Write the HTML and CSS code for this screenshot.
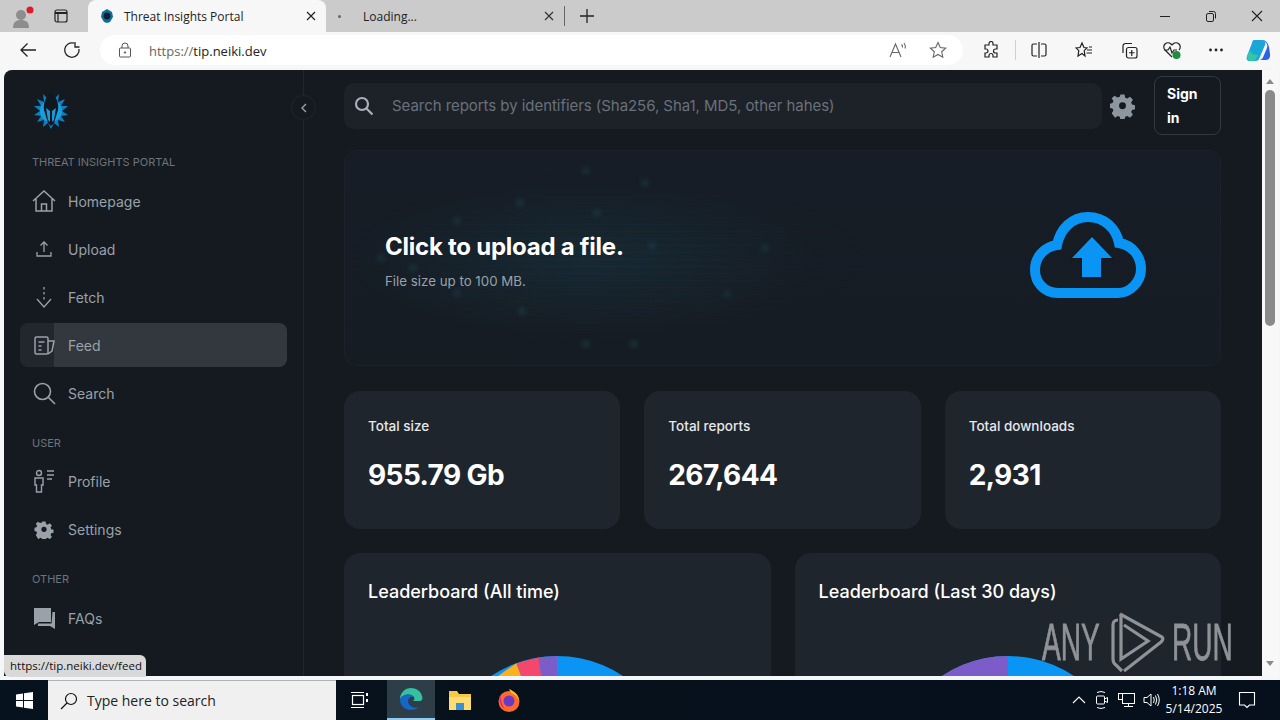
FILE: index.html
```html
<!DOCTYPE html>
<html>
	<head>
		<meta charset="UTF-8">
		<meta name="viewport" content="width=device-width, initial-scale=1.0">
		<title>Threat Insights Portal</title>
		<link rel="stylesheet" href="styles.css">
	</head>
	<body>
		<!-- browser tabs -->
		<div class="tabstrip">
			<div class="strip-icons">
				<svg class="profile" width="24" height="24" viewBox="0 0 24 24"><circle cx="10" cy="11" r="5" fill="#8d8d8d"/><path d="M2 24c0-6 3-8 8-8s8 2 8 8z" fill="#8d8d8d"/><circle cx="19" cy="6" r="3.5" fill="#e01b24"/></svg>
				<svg width="16" height="16" viewBox="0 0 16 16" fill="none" stroke="#222" stroke-width="1.2"><rect x="2" y="2" width="12" height="12" rx="2"/><path d="M2 5h12" stroke-width="2"/><path d="M5 5v9"/></svg>
			</div>
			<div class="tab tab-active">
				<svg width="14" height="16" viewBox="0 0 14 16"><path d="M7 1l5 3 1 5-3 5-3 1-3-1-3-5 1-5z" fill="#0d6f9c"/><circle cx="7" cy="8" r="3.4" fill="#10202c"/></svg>
				<span class="tab-title">Threat Insights Portal</span>
				<svg class="tab-close" width="12" height="12" viewBox="0 0 12 12" stroke="#222" stroke-width="1.2"><path d="M2 2l8 8M10 2l-8 8"/></svg>
			</div>
			<div class="tab">
				<span class="tab-dot"></span>
				<span class="tab-title">Loading...</span>
				<svg class="tab-close" width="12" height="12" viewBox="0 0 12 12" stroke="#333" stroke-width="1.2"><path d="M2 2l8 8M10 2l-8 8"/></svg>
			</div>
			<span class="tab-sep"></span>
			<svg class="tab-new" width="16" height="16" viewBox="0 0 16 16" stroke="#222" stroke-width="1.3"><path d="M8 1v14M1 8h14"/></svg>
			<div class="win-controls">
				<svg width="12" height="12" viewBox="0 0 12 12" stroke="#222"><path d="M1 6.500h10"/></svg>
				<svg width="12" height="12" viewBox="0 0 12 12" fill="none" stroke="#222"><rect x="1.500" y="3.500" width="7" height="8" rx="1.500"/><path d="M4 1.500h4.500a2 2 0 0 1 2 2v5"/></svg>
				<svg width="12" height="12" viewBox="0 0 12 12" stroke="#222" stroke-width="1.1"><path d="M1 1l10 10M11 1L1 11"/></svg>
			</div>
		</div>

		<!-- address bar -->
		<div class="toolbar">
			<svg class="tool-back" width="18" height="18" viewBox="0 0 18 18" fill="none" stroke="#222" stroke-width="1.3"><path d="M17 9H2M8.500 2.500L2 9l6.500 6.500"/></svg>
			<svg class="tool-reload" width="18" height="18" viewBox="0 0 18 18" fill="none" stroke="#222" stroke-width="1.3"><path d="M11 2.200A7.200 7.200 0 1 0 16 8M12 1v5h4.500"/></svg>
			<div class="address">
				<svg width="14" height="16" viewBox="0 0 14 16" fill="none" stroke="#555"><rect x="1.500" y="6" width="11" height="9" rx="1"/><path d="M4 6V4a3 3 0 0 1 6 0v2"/><circle cx="7" cy="10.500" r="0.700" fill="#555"/></svg>
				<span class="url"><span class="url-dim">https://</span>tip.neiki.dev</span>
				<svg class="addr-read" width="18" height="18" viewBox="0 0 18 18" fill="none" stroke="#666" stroke-width="1.100"><path d="M1 16L6.500 3 12 16M3 11.500h7M12.500 3.500q1.500 1.500 1 3M15 2q2 2.500 1 5.500"/></svg>
				<svg width="18" height="18" viewBox="0 0 18 18" fill="none" stroke="#666" stroke-width="1.100"><path d="M9 1.500l2.300 5 5.400.6-4 3.700 1.100 5.400L9 13.500l-4.800 2.700 1.100-5.400-4-3.700 5.400-.6z"/></svg>
			</div>
			<div class="tool-icons">
				<svg class="ti-ext" width="18" height="18" viewBox="0 0 18 18" fill="none" stroke="#222" stroke-width="1.200"><path d="M7 2.500a2 2 0 0 1 4 0V4h4v4h-1.500a2 2 0 0 0 0 4H15v4h-4v-1.500a2 2 0 0 0-4 0V16H3v-4h1a2 2 0 0 0 0-4H3V4h4z"/></svg>
				<span class="ti-sep"></span>
				<svg class="ti-split" width="18" height="18" viewBox="0 0 18 18" fill="none" stroke="#222" stroke-width="1.200"><path d="M7 3H3.500A1.500 1.500 0 0 0 2 4.500v9A1.500 1.500 0 0 0 3.500 15H7M11 3h3.500A1.500 1.500 0 0 1 16 4.500v9a1.500 1.500 0 0 1-1.500 1.500H11M9 1v16"/></svg>
				<svg class="ti-fav" width="18" height="18" viewBox="0 0 18 18" fill="none" stroke="#222" stroke-width="1.200"><path d="M7 2l2 4.500 3 .4-2.800 2.700.8 5.400L7 12.500l-4 2.500.8-5.400L1 6.900l4-.4zM12 9h5M11.500 12h5.500M14 6h3"/></svg>
				<svg class="ti-coll" width="18" height="18" viewBox="0 0 18 18" fill="none" stroke="#222" stroke-width="1.200"><rect x="6.500" y="6.500" width="10.500" height="10.500" rx="2"/><path d="M11.750 9v6M9 11.750h5.500M3 12V5a2.500 2.500 0 0 1 2.500-2.500H12"/></svg>
				<svg class="ti-health" width="20" height="20" viewBox="0 0 20 20" fill="none" stroke="#222" stroke-width="1.200"><path d="M10 17L3 10a4 4 0 0 1 6-6l1 1 1-1a4 4 0 0 1 6 6M2 10h4l2-3 2 6 2-3h3"/><circle cx="14.500" cy="15" r="4" fill="#1e8e3e" stroke="none"/></svg>
				<svg class="ti-more" width="18" height="18" viewBox="0 0 18 18" fill="#222"><circle cx="3.500" cy="9" r="1.400"/><circle cx="9" cy="9" r="1.400"/><circle cx="14.500" cy="9" r="1.400"/></svg>
				<svg class="ti-copilot" width="26" height="26" viewBox="0 0 26 26"><path d="M9 3h8c3 0 4 3 3 5l-6 14c-1 2-3 2-5 2H5c-3 0-4-2-3-5L7 6c.400-2 1-3 2-3z" fill="#1aa7d8"/><path d="M17 3c4 0 6 3 7 7l1 7c.500 3-1 6-4 6h-6c3-1 3-3 4-5l3-7c1-3 0-6-5-8z" fill="#2a62e8"/><path d="M8 24c-3 0-6-1-6-5l3-6c1 4 4 5 8 5l-2 4c-.500 1-1.500 2-3 2z" fill="#33c7a8"/></svg>
			</div>
		</div>

		<!-- the page itself -->
		<div class="viewport">
			<div class="page">
				<aside class="sidebar">
					<svg class="logo" width="36" height="38" viewBox="0 0 36 38">
						<path d="M18 9l3-1 5-5-1 8 7-3-4 7 7 0-6 5 6 4-7 1 4 6-7-2 1 7-5-4-3 6-3-6-5 4 1-7-7 2 4-6-7-1 6-4-6-5 7 0-4-7 7 3-1-8 5 5z" fill="#0f7fc0"/>
						<circle cx="18" cy="20" r="11" fill="#17a0e0"/>
						<path d="M18 2c5 3 8 10 7 17l-4 13-3 3-3-3-4-13c-1-7 2-14 7-17z" fill="#10171f"/>
						<path d="M13 17l4 3v11l-2-2zM23 17l-4 3v11l2-2z" fill="#1b9ad6"/>
					</svg>

					<div class="nav-label nav-label-first">THREAT INSIGHTS PORTAL</div>
					<a class="nav-item">
						<svg width="24" height="24" viewBox="0 0 24 24" fill="none" stroke="#9aa1a9" stroke-width="1.500"><path d="M1 12L12 2l11 10M4 10v12h16V10M9.500 22v-7h5v7"/></svg>
						<span>Homepage</span>
					</a>
					<a class="nav-item">
						<svg width="24" height="24" viewBox="0 0 24 24" fill="none" stroke="#9aa1a9" stroke-width="1.300"><path d="M12 15V5M8.500 8.500L12 5l3.500 3.500M5 15v4h14v-4"/></svg>
						<span>Upload</span>
					</a>
					<a class="nav-item">
						<svg width="24" height="24" viewBox="0 0 24 24" fill="none" stroke="#9aa1a9" stroke-width="1.300"><path d="M12 2v15" stroke-dasharray="2.500 2.500"/><path d="M5 14l7 8 7-8"/></svg>
						<span>Fetch</span>
					</a>
					<a class="nav-item nav-item-active">
						<svg width="24" height="24" viewBox="0 0 24 24" fill="none" stroke="#9aa1a9" stroke-width="1.500"><rect x="3" y="4" width="13" height="17" rx="1.500"/><path d="M6.500 9h6M6.500 13h3M6.500 17h3M16 8h6l-2 10-4 3"/></svg>
						<span>Feed</span>
					</a>
					<a class="nav-item">
						<svg width="24" height="24" viewBox="0 0 24 24" fill="none" stroke="#9aa1a9" stroke-width="1.600"><circle cx="10.500" cy="10.500" r="8"/><path d="M16.500 16.500L23 23"/></svg>
						<span>Search</span>
					</a>

					<div class="nav-label">USER</div>
					<a class="nav-item">
						<svg width="24" height="24" viewBox="0 0 24 24" fill="none" stroke="#9aa1a9" stroke-width="1.400"><circle cx="7" cy="4" r="2.500"/><path d="M3 9h8v7H9.500v7h-5v-7H3zM15 2h7M15 6h7M15 10h5"/></svg>
						<span>Profile</span>
					</a>
					<a class="nav-item">
						<svg width="24" height="19" viewBox="0 0 24 24"><path d="M10 2h4l.6 3 2 .9 2.600-1.700 2.800 2.800-1.700 2.600.9 2 2.800.6v4l-2.800.6-.9 2 1.700 2.600-2.800 2.800-2.600-1.700-2 .9-.6 2.600h-4l-.6-2.600-2-.9-2.600 1.700L1.600 19l1.700-2.600-.9-2L0 13.800v-4l2.400-.6.9-2L1.600 4.600l2.800-2.400L7 3.900l2.400-.9zM12 8.500a3.300 3.300 0 1 0 0 6.600 3.300 3.300 0 0 0 0-6.600z" fill="#9aa1a9" fill-rule="evenodd"/></svg>
						<span>Settings</span>
					</a>

					<div class="nav-label nav-label-last">OTHER</div>
					<a class="nav-item">
						<svg width="24" height="24" viewBox="0 0 24 24"><path d="M2 2h17v14H7l-5 3z" fill="#9aa1a9"/><path d="M20.500 6H23v17l-5-3H6v-2.500h13.500z" fill="#9aa1a9"/></svg>
						<span>FAQs</span>
					</a>
					<a class="nav-item">
						<svg width="24" height="24" viewBox="0 0 24 24" fill="none" stroke="#9aa1a9" stroke-width="1.500"><path d="M4 3h16v18H4z"/></svg>
					</a>
				</aside>

				<main class="content">
					<div class="topbar">
						<div class="searchbar">
							<svg width="20" height="20" viewBox="0 0 20 20" fill="none" stroke="#aab0b7" stroke-width="2.200"><circle cx="8" cy="8" r="6"/><path d="M12.500 12.500L18.500 18.500"/></svg>
							<span class="search-hint">Search reports by identifiers (Sha256, Sha1, MD5, other hahes)</span>
						</div>
						<svg class="top-gear" width="25" height="26" viewBox="0 0 24 24"><path d="M10 1h4l.6 3 2 .9 2.600-1.700 2.800 2.800-1.700 2.600.9 2 2.800.6v4l-2.800.6-.9 2 1.700 2.600-2.800 2.800-2.600-1.700-2 .9-.6 3h-4l-.6-3-2-.9-2.600 1.700L1.600 19l1.700-2.600-.9-2L0 13.800v-4l2.400-.6.9-2L1.600 4.600l2.800-2.400L7 3.900l2.400-.9zM12 8.500a3.300 3.300 0 1 0 0 6.600 3.300 3.300 0 0 0 0-6.600z" fill="#8d959e" fill-rule="evenodd"/></svg>
						<button class="signin">Sign in</button>
					</div>

					<section class="upload">
						<div class="upload-text">
							<h1>Click to upload a file.</h1>
							<p>File size up to 100 MB.</p>
						</div>
						<svg class="cloud" width="116" height="86" viewBox="0 0 116 86">
							<path d="M28 81C14 81 5 70 5 58C5 45 14 35 27 33C30 17 42 5 58 5C74 5 86 16 89 31C102 33 111 44 111 57C111 70 100 81 88 81Z" fill="none" stroke="#0a95f5" stroke-width="10"/>
							<path d="M62 25L82 46H71V65H52V46H42Z" fill="#0a95f5" stroke="#151a21" stroke-width="3" paint-order="stroke"/>
						</svg>
					</section>

					<div class="stats">
						<div class="card stat">
							<div class="stat-label">Total size</div>
							<div class="stat-value">955.79 Gb</div>
						</div>
						<div class="card stat">
							<div class="stat-label">Total reports</div>
							<div class="stat-value">267,644</div>
						</div>
						<div class="card stat">
							<div class="stat-label">Total downloads</div>
							<div class="stat-value">2,931</div>
						</div>
					</div>

					<div class="boards">
						<div class="card board">
							<h2>Leaderboard (All time)</h2>
							<svg class="pie" width="238" height="238" viewBox="-119 -119 238 238">
								<circle r="119" fill="#0a95f5"/>
								<path d="M0 0L0 -119L-18.600 -117.500Z" fill="#7c5cc9"/>
								<path d="M0 0L-18.600 -117.500L-40.700 -111.800Z" fill="#f4476b"/>
								<path d="M0 0L-40.700 -111.800L-91 -76.700Z" fill="#fbb01d"/>
							</svg>
						</div>
						<div class="card board">
							<h2>Leaderboard (Last 30 days)</h2>
							<svg class="pie" width="238" height="238" viewBox="-119 -119 238 238">
								<circle r="119" fill="#0a95f5"/>
								<path d="M0 0L0 -119A119 119 0 0 0 -119 0Z" fill="#7c5cc9"/>
							</svg>
						</div>
					</div>
				</main>
			</div>

			<div class="scrollbar">
				<span class="arrow-up"></span>
				<span class="thumb"></span>
				<span class="arrow-down"></span>
			</div>

			<button class="collapse">
				<svg width="8" height="10" viewBox="0 0 8 10" fill="none" stroke="#9aa1a9" stroke-width="1.400"><path d="M6 1L2 5l4 4"/></svg>
			</button>

			<div class="status-tip">https://tip.neiki.dev/feed</div>

			<div class="watermark">
				<span class="wm-word">ANY</span>
				<svg width="55" height="62" viewBox="0 0 55 62" fill="none" stroke="#8f9296" stroke-width="3.200"><path d="M8 9Q3 9 3 14V48Q3 52 6 54L12 60"/><path d="M10 3L52 26Q54 28 51 31L14 60"/><path d="M11 3V48L38 30L14 14"/></svg>
				<span class="wm-word">RUN</span>
			</div>
		</div>

		<!-- windows taskbar -->
		<div class="taskbar">
			<svg class="start" width="17" height="17" viewBox="0 0 17 17" fill="#fff"><path d="M0 2.500l7-1v6.500H0zM8 1.300L17 0v8H8zM0 9h7v6.500l-7-1zM8 9h9v8l-9-1.300z"/></svg>
			<div class="task-search">
				<svg width="18" height="18" viewBox="0 0 18 18" fill="none" stroke="#111" stroke-width="1.200"><circle cx="11" cy="7" r="5.500"/><path d="M7 11l-6 6"/></svg>
				<span>Type here to search</span>
			</div>
			<svg class="task-view" width="18" height="18" viewBox="0 0 18 18" fill="none" stroke="#fff" stroke-width="1.200"><rect x="1.500" y="4.500" width="11" height="9"/><path d="M0 1.500h13M0 16.500h13"/><path d="M16 2v3M16 8v3" stroke-width="2"/></svg>
			<div class="task-app task-app-active">
				<svg width="24" height="24" viewBox="0 0 24 24"><path d="M12 1a11 11 0 0 0-11 11c3-5 11-6 14-2 1 2 0 4-2 4h7c3 0 4-2 3-5-1-5-6-8-11-8z" fill="#35c1a0"/><path d="M1 12c0 7 5 11 11 11 3 0 6-1 8-3-5 2-11-1-11-6 0-3 3-5 6-4-4-4-11-3-14 2z" fill="#1468c8"/></svg>
			</div>
			<div class="task-app">
				<svg width="24" height="22" viewBox="0 0 24 22"><path d="M1 2h8l2 3h12v16H1z" fill="#f6c945"/><rect x="1" y="8" width="22" height="13" fill="#fbdc75"/><rect x="8" y="14" width="8" height="7" fill="#3a8fd1"/></svg>
			</div>
			<div class="task-app">
				<svg width="24" height="24" viewBox="0 0 24 24"><circle cx="12" cy="13.500" r="10.500" fill="#ff6a2c"/><path d="M12 1c5 2 10 6 10 12-2-5-5-7-8-8z" fill="#ffb627"/><circle cx="12" cy="13" r="5.500" fill="#6a3bc2"/><path d="M3 7c-1 5 0 11 5 14-3-3-4-8-5-14z" fill="#e31587"/></svg>
			</div>
			<div class="tray">
				<svg width="14" height="8" viewBox="0 0 14 8" fill="none" stroke="#fff" stroke-width="1.100"><path d="M1 7l6-6 6 6"/></svg>
				<svg width="16" height="20" viewBox="0 0 16 20" fill="none" stroke="#fff"><rect x="2.500" y="6" width="8" height="8" rx="1"/><path d="M10.500 9l3-1.500v5l-3-1.500M3 2.500q4-2 8 0M3 17.500q4 2 8 0"/></svg>
				<svg width="17" height="16" viewBox="0 0 17 16" fill="none" stroke="#fff"><rect x="4.500" y="1.500" width="12" height="10"/><path d="M10.500 11.500v3M6 14.500h9"/><rect x="0.500" y="1.500" width="4" height="6" fill="#06121d"/></svg>
				<svg width="17" height="16" viewBox="0 0 17 16" fill="none" stroke="#fff"><path d="M1 5.500h3l4-3.500v12l-4-3.500H1zM10.500 5q1.500 3 0 6M12.500 3.500q2.500 4.500 0 9M14.500 2q3.500 6 0 12"/></svg>
			</div>
			<div class="clock">
				<div>1:18 AM</div>
				<div>5/14/2025</div>
			</div>
			<svg class="notify" width="18" height="18" viewBox="0 0 18 18" fill="none" stroke="#fff" stroke-width="1.100"><path d="M1.500 1.500h15v12.500h-5L9 16.500 6.500 14h-5z"/></svg>
		</div>
	</body>
</html>
```

FILE: styles.css
```css
* {
	box-sizing: border-box;
}

html,
body {
	margin: 0;
	padding: 0;
	width: 1280px;
	height: 720px;
	overflow: hidden;
}

body {
	display: flex;
	flex-direction: column;
	background-color: #f4f6f8;
	font-family: "Open Sans", "Liberation Sans", sans-serif;
}

svg {
	display: block;
	flex: none;
}

/* tabs */
.tabstrip {
	height: 32px;
	background-color: #cbcbcb;
	display: flex;
	align-items: center;
	flex: none;
}

.strip-icons {
	width: 88px;
	display: flex;
	align-items: center;
	padding-left: 11px;
	gap: 18px;
}

.tab {
	width: 238px;
	height: 32px;
	display: flex;
	align-items: center;
	padding: 0 9px 0 12px;
	font-size: 12px;
	color: #222;
	border-radius: 8px 8px 0 0;
}

.tab-active {
	background-color: #f7f7f7;
}

.tab-title {
	flex: 1;
	margin-left: 10px;
}

.tab-dot {
	width: 3px;
	height: 3px;
	border-radius: 50%;
	background-color: #666;
	margin-right: 12px;
}

.tab-sep {
	width: 1px;
	height: 20px;
	background-color: #666;
}

.tab-new {
	margin-left: 14px;
}

.win-controls {
	margin-left: auto;
	display: flex;
	gap: 34px;
	padding-right: 17px;
}

/* address bar */
.toolbar {
	height: 36px;
	background-color: #f7f7f7;
	display: flex;
	align-items: center;
	flex: none;
}

.tool-back {
	margin-left: 19px;
}

.tool-reload {
	margin-left: 26px;
}

.address {
	width: 863px;
	height: 30px;
	margin-left: 19px;
	background-color: #fff;
	border-radius: 15px;
	display: flex;
	align-items: center;
	padding: 0 16px 0 18px;
	color: #222;
	font-size: 13px;
}

.url {
	margin-left: 17px;
	padding-top: 1px;
	flex: 1;
}

.url-dim {
	color: #666;
}

.addr-read {
	margin-right: 22px;
}

.tool-icons {
	display: flex;
	align-items: center;
	flex: 1;
}

.ti-ext {
	margin-left: 19px;
}

.ti-sep {
	width: 1px;
	height: 20px;
	background-color: #d0d0d0;
	margin-left: 15px;
}

.ti-split {
	margin-left: 14px;
}

.ti-fav {
	margin-left: 27px;
}

.ti-coll {
	margin-left: 27px;
}

.ti-health {
	margin-left: 24px;
}

.ti-more {
	margin-left: 25px;
}

.ti-copilot {
	margin-left: 20px;
}

/* page */
.viewport {
	position: relative;
	flex: none;
	height: 612px;
	padding: 2px 2px 4px 4px;
	display: flex;
}

.page {
	flex: 1;
	display: flex;
	background-color: #151a21;
	border-radius: 8px 0 0 0;
	overflow: hidden;
	font-family: Inter, "Liberation Sans", sans-serif;
}

.sidebar {
	width: 300px;
	flex: none;
	padding: 21px 16px 0;
	border-right: 1px solid #20262d;
}

.logo {
	margin-left: 13px;
}

.nav-label {
	height: 16px;
	line-height: 16px;
	margin: 20px 0 8px 12px;
	font-size: 11px;
	color: #6c747c;
}

.nav-label-first {
	margin-top: 25px;
	margin-bottom: 9px;
}

.nav-label-last {
	margin-bottom: 9px;
}

.nav-item {
	height: 44px;
	margin-bottom: 4px;
	padding-left: 12px;
	display: flex;
	align-items: center;
	gap: 12px;
	font-size: 14px;
	color: #9aa1a9;
	border-radius: 8px;
}

.nav-item-active {
	background: linear-gradient(90deg, #22272d 34px, #33383f 34px);
}

.collapse {
	position: absolute;
	left: 291px;
	top: 27px;
	width: 25px;
	height: 25px;
	padding: 0;
	display: flex;
	align-items: center;
	justify-content: center;
	background-color: #151a21;
	border: 1px solid #20262d;
	border-radius: 50%;
}

.content {
	flex: 1;
	min-width: 0;
	padding: 6px 41px 0 40px;
}

.topbar {
	display: flex;
	align-items: center;
}

.searchbar {
	flex: 1;
	height: 46px;
	background-color: #1d2229;
	border-radius: 10px;
	display: flex;
	align-items: center;
	padding-left: 10px;
	gap: 18px;
}

.search-hint {
	font-size: 15px;
	letter-spacing: -0.05px;
	color: #69717a;
}

.top-gear {
	margin: 0 19px 0 8px;
}

.signin {
	width: 67px;
	height: 59px;
	padding: 0 12px;
	background: none;
	border: 1px solid #333941;
	border-radius: 8px;
	color: #fff;
	font-family: inherit;
	font-size: 14px;
	font-weight: 700;
	line-height: 24px;
	text-align: left;
}

.upload {
	position: relative;
	height: 216px;
	margin-top: 15px;
	padding: 0 74px 0 40px;
	display: flex;
	align-items: center;
	justify-content: space-between;
	border: 1px solid #1c2229;
	border-radius: 12px;
}

/* faint network picture behind the upload text */
.upload::before {
	content: "";
	position: absolute;
	inset: 0;
	border-radius: 12px;
	background:
		radial-gradient(circle 7px at 241px 20px, rgba(40, 120, 130, 0.16), transparent),
		radial-gradient(circle 7px at 300px 32px, rgba(40, 120, 130, 0.16), transparent),
		radial-gradient(circle 7px at 175px 52px, rgba(40, 120, 130, 0.18), transparent),
		radial-gradient(circle 7px at 252px 62px, rgba(40, 120, 130, 0.16), transparent),
		radial-gradient(circle 7px at 112px 70px, rgba(40, 120, 130, 0.16), transparent),
		radial-gradient(circle 7px at 36px 107px, rgba(40, 120, 130, 0.16), transparent),
		radial-gradient(circle 7px at 68px 117px, rgba(40, 120, 130, 0.16), transparent),
		radial-gradient(circle 7px at 112px 142px, rgba(40, 120, 130, 0.16), transparent),
		radial-gradient(circle 7px at 177px 160px, rgba(40, 120, 130, 0.18), transparent),
		radial-gradient(circle 7px at 241px 193px, rgba(40, 120, 130, 0.18), transparent),
		radial-gradient(circle 7px at 289px 193px, rgba(40, 120, 130, 0.18), transparent),
		radial-gradient(circle 7px at 307px 95px, rgba(40, 120, 130, 0.14), transparent),
		radial-gradient(circle 7px at 420px 97px, rgba(40, 120, 130, 0.14), transparent),
		radial-gradient(circle 7px at 382px 143px, rgba(40, 120, 130, 0.12), transparent),
		radial-gradient(ellipse 230px 75px at 240px 108px, rgba(25, 75, 90, 0.26), transparent),
		linear-gradient(#161d26, #161c24);
}

.upload::after {
	content: "";
	position: absolute;
	inset: 0;
	background: repeating-linear-gradient(0deg, rgba(35, 100, 115, 0.1) 0 1px, transparent 1px 7px);
	-webkit-mask-image: radial-gradient(ellipse 260px 90px at 260px 108px, #000, transparent);
	mask-image: radial-gradient(ellipse 260px 90px at 260px 108px, #000, transparent);
}

.upload-text,
.cloud {
	position: relative;
	z-index: 1;
}

.upload-text {
	padding-top: 4px;
}

.upload h1 {
	margin: 0;
	font-size: 24px;
	font-weight: 700;
	letter-spacing: -0.25px;
	color: #fff;
}

.upload p {
	margin: 12px 0 0;
	font-size: 13.300px;
	color: #9aa1a9;
}

.cloud {
	margin-top: -6px;
}

.stats {
	display: grid;
	grid-template-columns: repeat(3, 1fr);
	gap: 24px;
	margin-top: 25px;
}

.card {
	background-color: #1f252d;
	border-radius: 16px;
}

.stat {
	height: 138px;
	padding: 27px 24px;
}

.stat-label {
	font-size: 13.500px;
	font-weight: 500;
	color: #e6e8ea;
}

.stat-value {
	margin-top: 24px;
	font-size: 28px;
	font-weight: 700;
	letter-spacing: -0.6px;
	color: #fff;
}

.boards {
	display: grid;
	grid-template-columns: repeat(2, 1fr);
	gap: 24px;
	margin-top: 24px;
}

.board {
	height: 300px;
	padding: 28px 24px;
}

.board h2 {
	margin: 0;
	font-size: 18px;
	font-weight: 500;
	color: #fff;
}

.pie {
	margin: 54px auto 0;
}

/* scrollbar */
.scrollbar {
	width: 16px;
	flex: none;
	background-color: #f8f8f8;
	display: flex;
	flex-direction: column;
	align-items: center;
	padding-top: 9px;
}

.thumb {
	width: 10px;
	height: 236px;
	margin-top: 6px;
	border-radius: 5px;
	background-color: #8a8a8a;
}

.arrow-up,
.arrow-down {
	width: 0;
	height: 0;
	border-left: 4px solid transparent;
	border-right: 4px solid transparent;
}

.arrow-up {
	border-bottom: 5px solid #8a8a8a;
}

.arrow-down {
	margin-top: auto;
	margin-bottom: 10px;
	border-top: 5px solid #8a8a8a;
}

.status-tip {
	position: absolute;
	left: 4px;
	bottom: 3px;
	height: 22px;
	padding: 0 4px 0 6px;
	line-height: 22px;
	font-size: 11.500px;
	color: #111;
	background-color: #d9d9d9;
	border-radius: 0 6px 0 6px;
}

.watermark {
	position: absolute;
	left: 1042px;
	top: 543px;
	display: flex;
	align-items: center;
	font-family: "Liberation Sans", sans-serif;
	font-size: 52px;
	line-height: 62px;
	color: #8f9296;
	-webkit-text-stroke: 0.8px #8f9296;
}

.wm-word {
	display: block;
	width: 62px;
	transform: scaleX(0.54);
	transform-origin: left center;
}

.watermark svg {
	margin: 0 7px 0 6px;
}

/* windows taskbar */
.taskbar {
	height: 40px;
	flex: none;
	background: linear-gradient(90deg, #06121d, #06101c);
	display: flex;
	align-items: center;
	color: #fff;
	font-size: 12px;
}

.start {
	margin-left: 16px;
}

.task-search {
	width: 288px;
	height: 40px;
	margin-left: 15px;
	padding-left: 12px;
	display: flex;
	align-items: center;
	gap: 9px;
	background-color: #f0f0f0;
	border-top: 1px solid #aeb3b8;
	color: #222;
	font-size: 14px;
}

.task-view {
	margin-left: 15px;
}

.task-app {
	width: 48px;
	height: 40px;
	margin-left: 1px;
	display: flex;
	align-items: center;
	justify-content: center;
}

.task-app-active {
	margin-left: 18px;
	background-color: #2e3e49;
	border-bottom: 2px solid #8ecbf0;
}

.tray {
	margin-left: auto;
	display: flex;
	align-items: center;
	gap: 8px;
}

.clock {
	width: 60px;
	margin-left: 4px;
	text-align: center;
	line-height: 18px;
}

.notify {
	margin: 0 24px 0 14px;
}
```
